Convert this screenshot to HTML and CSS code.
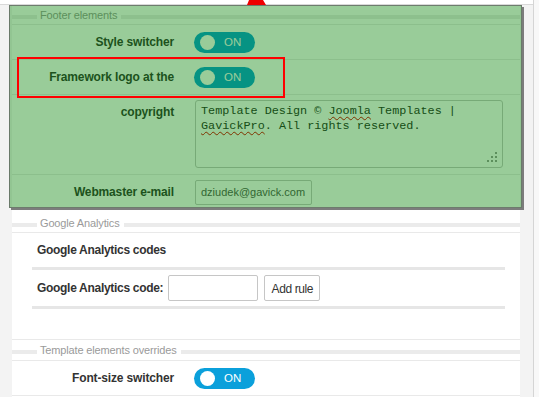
FILE: index.html
```html
<!DOCTYPE html>
<html lang="en">
<head>
<meta charset="utf-8">
<title>Template settings</title>
<link rel="stylesheet" href="styles.css">
</head>
<body>
<div class="app">
  <div class="page">
    <div class="topbar"></div>
    <div class="panel">
      <section class="fieldset footer">
        <div class="legend"><span class="band band-left"></span><span class="legend-text">Footer elements</span><span class="band band-right"></span></div>
        <div class="row">
          <label class="label">Style switcher</label>
          <div class="field"><span class="toggle"><span class="knob"></span><span class="toggle-text">ON</span></span></div>
        </div>
        <div class="row">
          <label class="label">Framework logo at the</label>
          <div class="field"><span class="toggle"><span class="knob"></span><span class="toggle-text">ON</span></span></div>
        </div>
        <div class="row row-tall">
          <label class="label label-top">copyright</label>
          <div class="field">
            <div class="textarea">Template Design © <span class="typo">Joomla</span> Templates |<br><span class="typo">GavickPro</span>. All rights reserved.
              <svg class="grip" width="10" height="10" viewBox="0 0 10 10"><rect x="8" y="0" width="2" height="2"/><rect x="4" y="4" width="2" height="2"/><rect x="8" y="4" width="2" height="2"/><rect x="0" y="8" width="2" height="2"/><rect x="4" y="8" width="2" height="2"/><rect x="8" y="8" width="2" height="2"/></svg>
            </div>
          </div>
        </div>
        <div class="row row-last">
          <label class="label">Webmaster e-mail</label>
          <div class="field"><div class="input email">dziudek@gavick.com</div></div>
        </div>
        <div class="overlay"></div>
        <div class="mark"></div>
      </section>

      <section class="fieldset ga">
        <div class="legend"><span class="band band-left"></span><span class="legend-text">Google Analytics</span><span class="band band-right"></span></div>
        <div class="ga-body">
          <div class="ga-head">Google Analytics codes</div>
          <div class="ga-row">
            <span class="ga-label">Google Analytics code:</span>
            <span class="input ga-input"></span>
            <span class="button">Add rule</span>
          </div>
        </div>
      </section>

      <section class="fieldset overrides">
        <div class="legend"><span class="band band-left"></span><span class="legend-text">Template elements overrides</span><span class="band band-right"></span></div>
        <div class="row">
          <label class="label">Font-size switcher</label>
          <div class="field"><span class="toggle"><span class="knob"></span><span class="toggle-text">ON</span></span></div>
        </div>
      </section>
    </div>
  </div>
  <div class="rail"></div>
</div>
<svg class="arrow" width="19" height="5" viewBox="0 0 19 5"><polygon points="2,0 16,0 19,5 0,5"/></svg>
</body>
</html>
```
FILE: styles.css
```css
* { box-sizing: border-box; }
html, body { margin: 0; padding: 0; }
body {
  background: #f3f3f3;
  font-family: "Liberation Sans", Arial, sans-serif;
  color: #333;
  overflow: hidden;
  position: relative;
}
.app { display: flex; min-height: 397px; }
.page { width: 533px; }
.rail { flex: 1; border-left: 1px solid #d5d5d5; background: #f8f8f8; }
.topbar { height: 5px; background: #fff; border-bottom: 1px solid #d9d9d9; }
.panel { margin-left: 12px; width: 508px; background: #fff; min-height: 392px; }

.fieldset { position: relative; }
.footer { padding-bottom: 3px; }

.legend {
  display: flex;
  align-items: center;
  padding: 4px 0 2px;
  border-bottom: 1px solid #e9e9e9;
}
.overrides .legend { padding-bottom: 3px; }
.band { height: 4px; background: #ebebeb; margin-top: 2px; }
.band-left { width: 25px; }
.band-right { flex: 1; }
.legend-text {
  font-size: 11px;
  line-height: 13px;
  color: #9a9a9a;
  padding: 0 4px 0 3px;
  letter-spacing: -0.15px;
}

.row {
  display: grid;
  grid-template-columns: 162px 1fr;
  column-gap: 20px;
  align-items: center;
  height: 35px;
  border-bottom: 1px solid #e9e9e9;
}
.row-tall { height: 80px; align-items: start; }
.row-last { border-bottom: none; }
.label {
  text-align: right;
  font-weight: bold;
  font-size: 12px;
  line-height: 15px;
  letter-spacing: -0.15px;
  color: #333;
}
.label-top { margin-top: 10px; }
.field { display: flex; align-items: center; }

.toggle {
  display: flex;
  align-items: center;
  width: 61px;
  height: 21px;
  border-radius: 11px;
  background: #0ba0db;
  padding-left: 6px;
}
.knob { width: 15px; height: 15px; border-radius: 50%; background: #fff; }
.toggle-text { margin-left: 9px; color: #fff; font-size: 11.5px; line-height: 13px; }

.textarea {
  position: relative;
  margin: 5px 0 0 1px;
  width: 308px;
  height: 68px;
  border: 1px solid #c6c6c6;
  border-radius: 3px;
  background: #fff;
  padding: 3px 5px;
  font-family: "Liberation Mono", "Courier New", monospace;
  font-size: 11.8px;
  line-height: 15px;
  color: #2a2a2a;
}
.typo {
  text-decoration: underline wavy #d40000;
  text-decoration-thickness: 1px;
  text-underline-offset: 2px;
}
.grip { position: absolute; right: 5px; bottom: 5px; fill: #9a9a9a; }

.input {
  display: block;
  border: 1px solid #c6c6c6;
  border-radius: 2px;
  background: #fff;
}
.email {
  margin-left: 1px;
  width: 117px;
  height: 25px;
  padding: 0 5px;
  font-size: 11px;
  line-height: 23px;
  color: #555;
}

.ga-body {
  padding: 0 15px 30px 20px;
  border-bottom: 1px solid #e9e9e9;
}
.ga-head {
  padding: 10px 5px;
  border-bottom: 3px solid #e6e6e6;
  font-weight: bold;
  font-size: 12px;
  line-height: 14px;
  letter-spacing: -0.3px;
}
.ga-row {
  display: flex;
  align-items: center;
  padding: 5px;
  border-bottom: 3px solid #e6e6e6;
}
.ga-label {
  font-weight: bold;
  font-size: 12px;
  letter-spacing: -0.3px;
  margin-right: 5px;
}
.ga-input { width: 90px; height: 26px; }
.button {
  margin-left: 6px;
  width: 56px;
  height: 26px;
  border: 1px solid #c6c6c6;
  border-radius: 2px;
  background: #fff;
  font-size: 12px;
  letter-spacing: -0.4px;
  line-height: 26px;
  text-align: center;
  color: #333;
}

.overlay {
  position: absolute;
  top: 0;
  left: -3px;
  right: -2px;
  bottom: 5px;
  background: rgba(0, 128, 0, 0.4);
  border: 1px solid rgba(90, 90, 90, 0.7);
  box-shadow: 2px 2px 0 #7c7c7c;
  z-index: 1;
}
.mark {
  position: absolute;
  left: 5px;
  top: 52px;
  width: 268px;
  height: 41px;
  border: 2px solid #ff0000;
  z-index: 2;
}
.arrow { position: absolute; left: 247px; top: 0; fill: #ee0000; z-index: 3; }
```
